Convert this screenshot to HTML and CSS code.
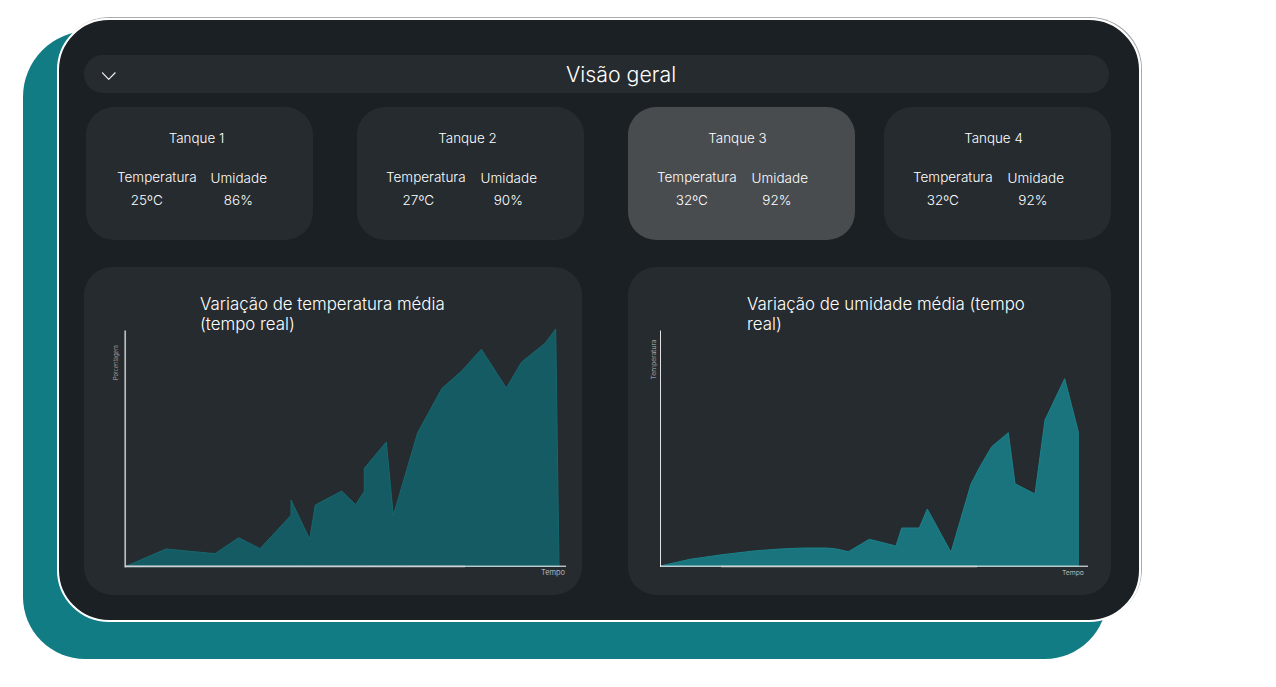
FILE: index.html
```html
<!DOCTYPE html>
<html lang="pt-BR">

<head>
    <meta charset="UTF-8">
    <meta name="viewport" content="width=device-width, initial-scale=1.0">
    <title>Visão geral</title>
    <link rel="stylesheet" href="styles.css">
</head>

<body>
<div class="device">
    <!-- Teal shape sitting behind the tablet -->
    <div class="backdrop"></div>

    <div class="title-bar">
        <svg class="chevron" width="14" height="8" viewBox="0 0 14 8">
            <path d="M0 0.5 L6.7 7.3 L13.4 0.5" fill="none" stroke="#f2f2f2" stroke-width="1.2"/>
        </svg>
        <h1>Visão geral</h1>
    </div>

    <div class="tanks">
        <div class="tank tank-1">
            <h2>Tanque 1</h2>
            <div class="metrics">
                <div class="metric temperature"><span class="label">Temperatura</span><span class="value">25ºC</span></div>
                <div class="metric humidity"><span class="label">Umidade</span><span class="value">86%</span></div>
            </div>
        </div>
        <div class="tank tank-2">
            <h2>Tanque 2</h2>
            <div class="metrics">
                <div class="metric temperature"><span class="label">Temperatura</span><span class="value">27ºC</span></div>
                <div class="metric humidity"><span class="label">Umidade</span><span class="value">90%</span></div>
            </div>
        </div>
        <div class="tank tank-3 active">
            <h2>Tanque 3</h2>
            <div class="metrics">
                <div class="metric temperature"><span class="label">Temperatura</span><span class="value">32ºC</span></div>
                <div class="metric humidity"><span class="label">Umidade</span><span class="value">92%</span></div>
            </div>
        </div>
        <div class="tank tank-4">
            <h2>Tanque 4</h2>
            <div class="metrics">
                <div class="metric temperature"><span class="label">Temperatura</span><span class="value">32ºC</span></div>
                <div class="metric humidity"><span class="label">Umidade</span><span class="value">92%</span></div>
            </div>
        </div>
    </div>

    <div class="charts">
        <div class="chart chart-temp">
            <h3>Variação de temperatura média (tempo real)</h3>
            <svg class="plot" width="498" height="328" viewBox="84 267 498 328">
                <polygon class="area-temp" points="125,566.7 166,549 215,553.7 238.7,537.7 260,548.7 291,515.3 291,500 309.7,539.3 315.3,505 341.7,491 355.7,504.7 364.3,491.3 364.3,468.3 386.3,442 393.3,515.7 417.7,432.7 442,388.3 461.7,371 481.3,349.3 506.3,388 521.7,362 545,343.3 555.7,329 559,566.5"/>
                <line class="axis-y" x1="125.2" y1="330.5" x2="125.2" y2="567.4"/>
                <line class="axis-x" x1="125" y1="566.2" x2="566" y2="566.2"/>
                <line class="axis-x-shade" x1="125" y1="566.6" x2="465" y2="566.6"/>
                <text class="axis-small" transform="translate(118 380) rotate(-90)">Porcentagem</text>
                <text class="axis-name" x="541" y="575">Tempo</text>
            </svg>
        </div>
        <div class="chart chart-hum">
            <h3>Variação de umidade média (tempo real)</h3>
            <svg class="plot" width="483" height="328" viewBox="628 267 483 328">
                <polygon class="area-hum" points="660,566 690,559.3 720,555 753.3,551 780,549 803.3,548 826.7,548 836.7,549 848.3,551.7 869.3,539.3 896,546 901.7,528 919.3,528 927.3,509 951,552.3 971,484 980,466.7 991.7,446.7 1008.3,432.7 1015,483.7 1035,494 1045,420 1064.7,378.7 1078.3,431.7 1078.3,566"/>
                <line class="axis-y thin" x1="660.5" y1="330.5" x2="660.5" y2="567"/>
                <line class="axis-x" x1="660" y1="566.2" x2="1088" y2="566.2"/>
                <line class="axis-x-shade" x1="721" y1="566.6" x2="977" y2="566.6"/>
                <text class="axis-small wide" transform="translate(656 379.5) rotate(-90)">Temperatura</text>
                <text class="axis-name small" x="1062" y="575">Tempo</text>
            </svg>
        </div>
    </div>
</div>
</body>

</html>
```

FILE: styles.css
```css
* {
    box-sizing: border-box;
}

html,
body {
    height: 100%;
}

body {
    font-family: 'Inter', sans-serif;
    font-weight: 300;
    background-color: #fff;
    margin: 0;
    padding: 18px 0 0 57px;
    color: #fff;
    overflow: hidden;
}

.device {
    position: relative;
    z-index: 1;
    width: 1084px;
    height: 604px;
    padding: 35px 28px 0 25px;
    background-color: #1b2024;
    border: 2px solid #fff;
    border-radius: 52px;
    box-shadow: 1px -1px 0 0 #a9abad;
}

.backdrop {
    position: absolute;
    z-index: -2;
    left: -36px;
    top: 11px;
    right: 32px;
    bottom: -39px;
    background-color: #127c85;
    border-radius: 66px 62px 62px 62px;
}

/* The device background has to cover the backdrop, so it is painted again here */
.device::before {
    content: '';
    position: absolute;
    z-index: -1;
    inset: -2px;
    background-color: #1b2024;
    border: 2px solid #fff;
    border-radius: 52px;
}

.title-bar {
    display: flex;
    align-items: center;
    height: 38px;
    margin-right: 2px;
    padding-left: 18px;
    background-color: #262b2f;
    border-radius: 19px;
}

.chevron {
    flex: none;
    margin-top: 3px;
}

.title-bar h1 {
    margin: 0 0 0 450px;
    font-size: 21.3px;
    font-weight: 300;
}

.tanks {
    display: flex;
    gap: 44px;
    margin: 14px 0 0 2px;
}

.tank {
    width: 227px;
    height: 133px;
    padding-top: 23px;
    background-color: #262b2f;
    border-radius: 28px;
}

.tank-4 {
    margin-left: -15px;
}

.tank.active {
    background-color: #494c4f;
}

.tank h2 {
    margin: 0;
    padding-right: 6px;
    font-size: 13.4px;
    line-height: 17px;
    font-weight: 300;
    text-align: center;
}

.tank-3 h2,
.tank-4 h2 {
    padding-right: 8px;
}

.metrics {
    display: flex;
    gap: 15px;
    margin-top: 22px;
    padding-left: 29px;
}

.tank-1 .metrics {
    gap: 14px;
    padding-left: 31px;
}

.metric {
    display: flex;
    flex-direction: column;
    font-size: 13.5px;
    line-height: 17px;
}

.label {
    white-space: nowrap;
}

.value {
    margin-top: 6px;
    text-align: center;
}

.humidity {
    padding-top: 1px;
}

.humidity .value {
    margin-top: 5px;
    padding-right: 1px;
}

.temperature .value {
    padding-right: 20px;
}

.tank-2 .temperature .value {
    padding-right: 15px;
}

.tank-3 .temperature .value {
    padding-right: 10px;
}

.tank-3 .humidity .value,
.tank-4 .humidity .value {
    padding-right: 6px;
}

.charts {
    display: flex;
    justify-content: space-between;
    margin-top: 27px;
}

.chart {
    display: grid;
    height: 328px;
    background-color: #262b2f;
    border-radius: 28px;
}

.chart-temp {
    width: 498px;
}

.chart-hum {
    width: 483px;
}

/* Title and plot share one grid cell, the plot axis runs past the title */
.chart h3,
.plot {
    grid-area: 1 / 1;
}

.chart h3 {
    margin: 27px 0 0 116px;
    max-width: 285px;
    font-size: 16.85px;
    line-height: 20px;
    font-weight: 300;
}

.chart-hum h3 {
    margin-left: 119px;
}

.plot {
    display: block;
}

.area-temp {
    fill: #155b64;
    stroke: #16686f;
    stroke-width: 1;
    stroke-linejoin: round;
}

.area-hum {
    fill: #1a747d;
    stroke: #1b818b;
    stroke-width: 1;
    stroke-linejoin: round;
}

.axis-y {
    stroke: #b9bcbe;
    stroke-width: 1.7;
}

.axis-y.thin {
    stroke: #e0e1e2;
    stroke-width: 1;
}

.axis-x {
    stroke: #fff;
    stroke-width: 1;
}

.axis-x-shade {
    stroke: #cdd1d2;
    stroke-width: 1.5;
}

.axis-small {
    fill: #bdbfc0;
    font-size: 5.6px;
}

.axis-small.wide {
    font-size: 6.8px;
}

.axis-name {
    fill: #d5d7d8;
    font-size: 7.5px;
}

.axis-name.small {
    font-size: 6.8px;
}
```
